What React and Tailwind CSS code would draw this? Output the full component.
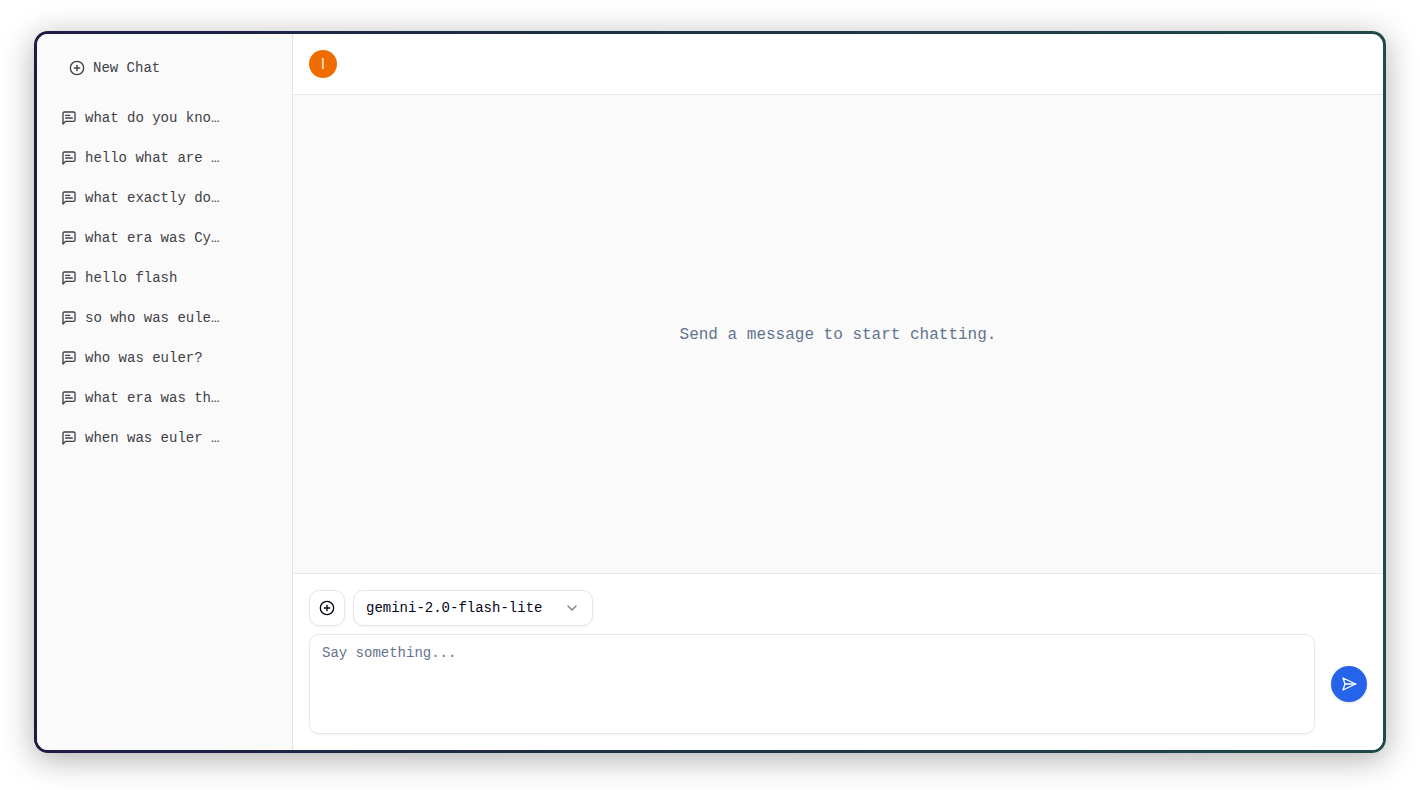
import { useState } from 'react';
import { CirclePlus, ChevronDown } from 'lucide-react';

const chats = [
  'what do you kno…',
  'hello what are …',
  'what exactly do…',
  'what era was Cy…',
  'hello flash',
  'so who was eule…',
  'who was euler?',
  'what era was th…',
  'when was euler …',
];

function MessageIcon() {
  return (
    <svg
      className="size-4 shrink-0"
      viewBox="0 0 24 24"
      fill="none"
      stroke="currentColor"
      strokeWidth="2"
      strokeLinecap="round"
      strokeLinejoin="round"
      aria-hidden="true"
    >
      <path d="M21 15a2 2 0 0 1-2 2H7l-4 4V5a2 2 0 0 1 2-2h14a2 2 0 0 1 2 2z" />
      <path d="M13 8H7" />
      <path d="M17 12H7" />
    </svg>
  );
}

function SendIcon() {
  return (
    <svg
      className="size-4"
      viewBox="0 0 24 24"
      fill="none"
      stroke="currentColor"
      strokeWidth="2"
      strokeLinecap="round"
      strokeLinejoin="round"
      aria-hidden="true"
    >
      <path d="m3 3 3 9-3 9 19-9Z" />
      <path d="M6 12h16" />
    </svg>
  );
}

function Sidebar() {
  return (
    <aside className="w-64 shrink-0 border-r border-[#e4e4e7] bg-[#fafafa] text-sm text-zinc-700">
      <div className="px-4 pt-4">
        <button type="button" className="flex h-9 w-full items-center gap-2 px-4">
          <CirclePlus className="size-4" />
          New Chat
        </button>
      </div>
      <nav className="flex flex-col gap-1 px-2 pt-3.5">
        {chats.map((chat) => (
          <a key={chat} href="#" className="flex h-9 items-center gap-2 px-4">
            <MessageIcon />
            <span>{chat}</span>
          </a>
        ))}
      </nav>
    </aside>
  );
}

function Composer() {
  const [message, setMessage] = useState('');

  return (
    <form
      className="flex flex-col gap-2 border-t border-[#e4e6ee] bg-white p-4 text-sm"
      onSubmit={(e) => e.preventDefault()}
    >
      <div className="flex gap-2">
        <button
          type="button"
          aria-label="Add"
          className="flex size-9 items-center justify-center rounded-[10px] border border-[#e4e6ee] text-slate-950 shadow-xs"
        >
          <CirclePlus className="size-4" />
        </button>
        <div className="relative w-60">
          <select
            aria-label="Model"
            className="h-9 w-full appearance-none rounded-[10px] border border-[#e4e6ee] bg-white pr-9 pl-3 text-slate-950 shadow-xs"
          >
            <option>gemini-2.0-flash-lite</option>
          </select>
          <ChevronDown className="pointer-events-none absolute top-2.5 right-[13px] size-4 opacity-50" />
        </div>
      </div>
      <div className="flex items-center gap-4">
        <textarea
          aria-label="Message"
          value={message}
          onChange={(e) => setMessage(e.target.value)}
          placeholder="Say something..."
          className="h-25 min-w-0 flex-1 resize-none rounded-[10px] border border-[#e4e6ee] px-3 py-2 shadow-xs placeholder:text-slate-500"
        />
        <button
          type="submit"
          aria-label="Send"
          className="flex size-9 shrink-0 items-center justify-center rounded-full bg-[#2563eb] text-white shadow-sm"
        >
          <SendIcon />
        </button>
      </div>
    </form>
  );
}

export default function App() {
  return (
    <div className="flex h-screen bg-white px-[34px] pt-[31px] pb-[37px] font-['Liberation_Mono',monospace]">
      <div className="flex min-w-0 flex-1 rounded-[14px] bg-linear-to-r from-[#1d1b45] to-[#1f4a47] p-[3px] shadow-[0_6px_32px_rgba(0,0,0,0.32)]">
        <div className="flex min-w-0 flex-1 overflow-hidden rounded-[11px] bg-white">
          <Sidebar />
          <div className="flex min-w-0 flex-1 flex-col">
            <header className="border-b border-[#e4e6ee] p-4">
              <div className="flex size-7 items-center justify-center rounded-full bg-[#ef6c00] font-['Roboto',sans-serif] text-sm text-orange-50">
                I
              </div>
            </header>
            <main className="flex flex-1 items-center justify-center bg-[#fafafa] pt-0.5 text-slate-500">
              <p>Send a message to start chatting.</p>
            </main>
            <Composer />
          </div>
        </div>
      </div>
    </div>
  );
}
